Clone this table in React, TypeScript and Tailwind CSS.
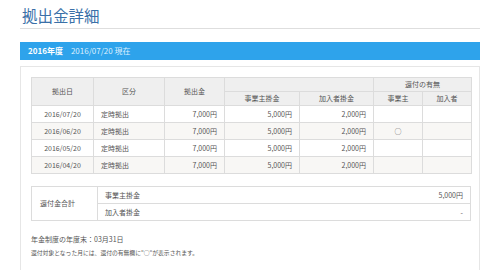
import React from "react";

const rows = [
  { date: "2016/07/20", kind: "定時拠出", total: "7,000円", employer: "5,000円", member: "2,000円", refundEmployer: "", refundMember: "" },
  { date: "2016/06/20", kind: "定時拠出", total: "7,000円", employer: "5,000円", member: "2,000円", refundEmployer: "○", refundMember: "" },
  { date: "2016/05/20", kind: "定時拠出", total: "7,000円", employer: "5,000円", member: "2,000円", refundEmployer: "", refundMember: "" },
  { date: "2016/04/20", kind: "定時拠出", total: "7,000円", employer: "5,000円", member: "2,000円", refundEmployer: "", refundMember: "" },
];

const th = "border border-[#dcdcdc] bg-[#efefef] font-normal text-[#555] text-center p-0";
const td = "border border-[#dcdcdc] px-[7px] p-0 text-[#555]";

const App: React.FC = () => {
  return (
    <div className="w-[500px] h-[270px] bg-white overflow-hidden font-['Noto_Sans_CJK_JP','Noto_Sans',sans-serif]">
      <div className="ml-[20px] w-[460px] pt-[5px]">
        <h1 className="text-[15.5px] leading-[20px] text-[#3a70a8] pl-[2px] pb-[3px] border-b border-[#dedede]">
          拠出金詳細
        </h1>

        <div className="mt-[13px] h-[18px] bg-[#2ea3eb] flex items-center px-[8px] gap-[8px] text-[8px]">
          <span className="font-bold text-white">2016年度</span>
          <span className="text-[#dcefff]">2016/07/20 現在</span>
        </div>

        <div className="mt-[6px] border border-[#e6e6e6] px-[10px] pt-[10px] pb-[13px]">
          <table className="w-[440px] border-collapse table-fixed text-[7px]">
            <colgroup>
              <col className="w-[62px]" />
              <col className="w-[71px]" />
              <col className="w-[60px]" />
              <col className="w-[75px]" />
              <col className="w-[74px]" />
              <col className="w-[49px]" />
              <col className="w-[49px]" />
            </colgroup>
            <thead>
              <tr className="h-[14px]">
                <th rowSpan={2} className={th}>拠出日</th>
                <th rowSpan={2} className={th}>区分</th>
                <th rowSpan={2} className={th}>拠出金</th>
                <th colSpan={2} className={th}></th>
                <th colSpan={2} className={th}>還付の有無</th>
              </tr>
              <tr className="h-[14px]">
                <th className={th}>事業主掛金</th>
                <th className={th}>加入者掛金</th>
                <th className={th}>事業主</th>
                <th className={th}>加入者</th>
              </tr>
            </thead>
            <tbody>
              {rows.map((r, i) => (
                <tr key={r.date} className={`h-[17px] ${i % 2 === 1 ? "bg-[#f8f7f5]" : "bg-white"}`}>
                  <td className={`${td} text-center`}>{r.date}</td>
                  <td className={td}>{r.kind}</td>
                  <td className={`${td} text-right`}>{r.total}</td>
                  <td className={`${td} text-right`}>{r.employer}</td>
                  <td className={`${td} text-right`}>{r.member}</td>
                  <td className={`${td} text-center`}>{r.refundEmployer}</td>
                  <td className={`${td} text-center`}>{r.refundMember}</td>
                </tr>
              ))}
            </tbody>
          </table>

          <table className="mt-[12px] w-[440px] border-collapse table-fixed text-[7px]">
            <colgroup>
              <col className="w-[66px]" />
              <col />
            </colgroup>
            <tbody>
              <tr className="h-[17px]">
                <td rowSpan={2} className={`${td} px-[8px]`}>還付金合計</td>
                <td className={td}>
                  <div className="flex justify-between">
                    <span>事業主掛金</span>
                    <span>5,000円</span>
                  </div>
                </td>
              </tr>
              <tr className="h-[17px]">
                <td className={td}>
                  <div className="flex justify-between">
                    <span>加入者掛金</span>
                    <span>-</span>
                  </div>
                </td>
              </tr>
            </tbody>
          </table>

          <p className="mt-[13px] text-[7px] text-[#555] leading-[10px]">年金制度の年度末：03月31日</p>
          <p className="mt-[5px] text-[5.8px] text-[#555] leading-[8px]">
            還付対象となった月には、還付の有無欄に"○"が表示されます。
          </p>
        </div>
      </div>
    </div>
  );
};

export default App;
